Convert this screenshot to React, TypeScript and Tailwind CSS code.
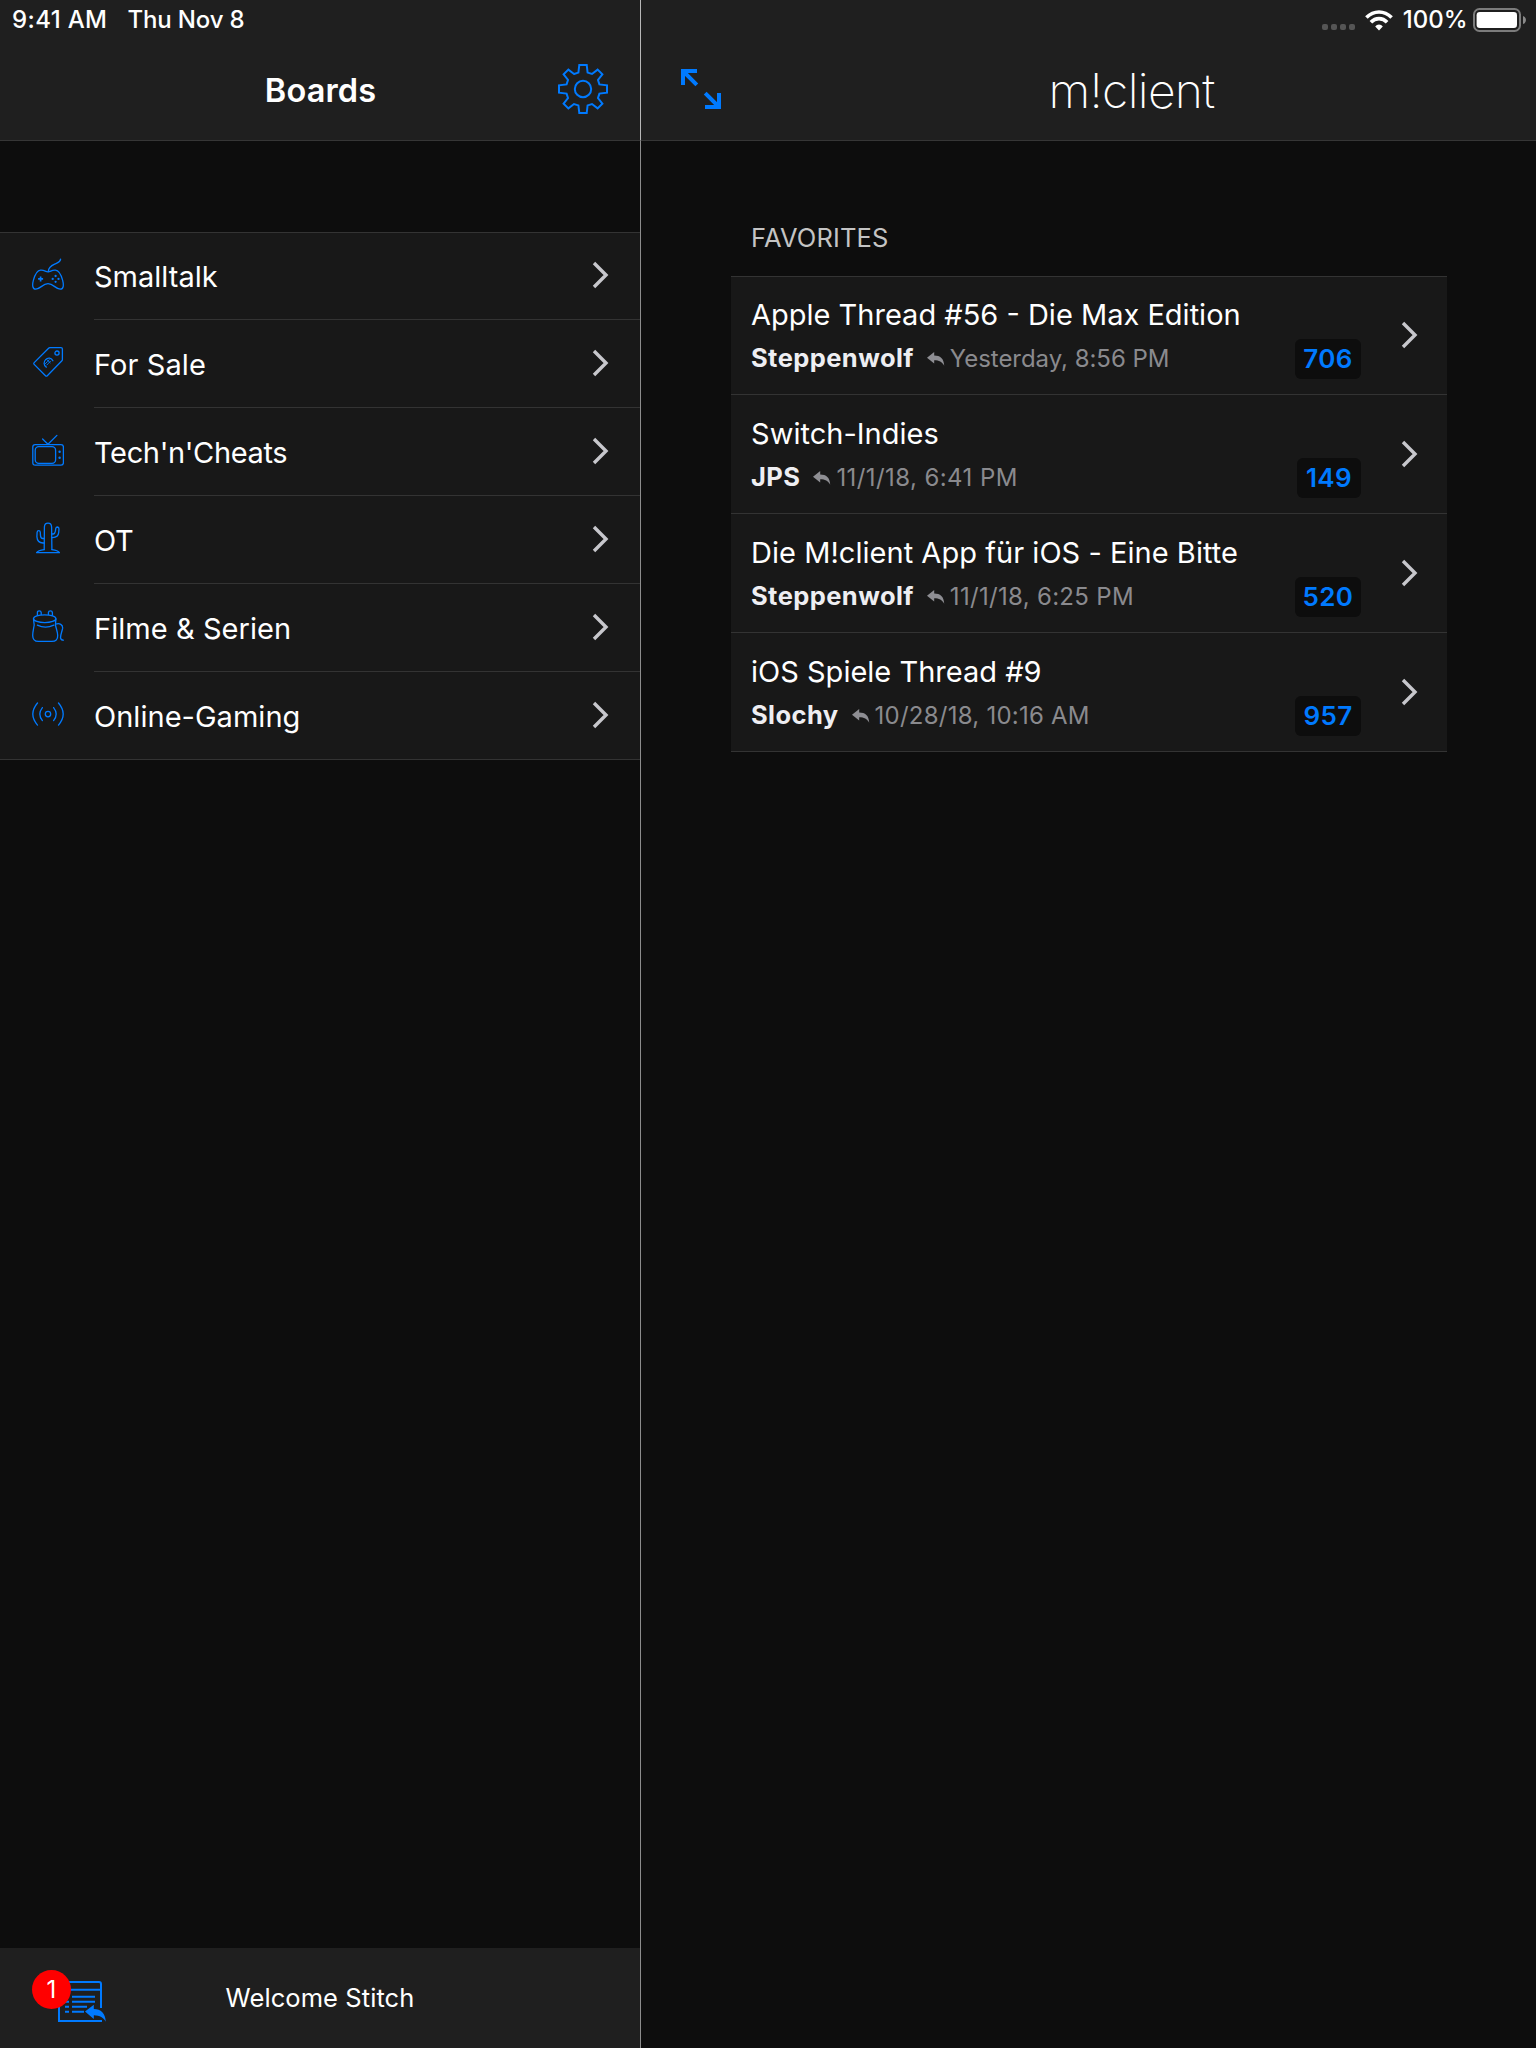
import React from "react";

const BLUE = "#007aff";

function SidebarIcon({ children }: { children: React.ReactNode }) {
  return (
    <svg
      width="32"
      height="32"
      viewBox="0 0 32 32"
      fill="none"
      stroke={BLUE}
      strokeWidth="1.3"
      strokeLinecap="round"
      strokeLinejoin="round"
      className="shrink-0"
    >
      {children}
    </svg>
  );
}

function GamepadIcon() {
  return (
    <SidebarIcon>
      <path d="M28.6 1.2C28.2 4.6 25.6 4.8 22.6 6.2C19 7.8 16.4 9.6 16.3 13.6" />
      <path d="M16 13.8C13.4 13.8 12.6 11.8 8.6 12.1C4.6 12.4 2.8 17 1.4 22.2C0 27.6 0.6 31.2 3.8 31.2C8.2 31.2 10.6 25.6 16 25.6C21.4 25.6 23.8 31.2 28.2 31.2C31.4 31.2 32 27.6 30.6 22.2C29.2 17 27.4 12.4 23.4 12.1C19.4 11.8 18.6 13.8 16 13.8Z" />
      <path d="M8.6 18.4V23.4M6.1 20.9H11.1" strokeWidth="1.7" strokeLinecap="butt" />
      <g fill={BLUE} stroke="none">
        <circle cx="23.6" cy="18" r="1.15" />
        <circle cx="23.6" cy="23.8" r="1.15" />
        <circle cx="20.7" cy="20.9" r="1.15" />
        <circle cx="26.5" cy="20.9" r="1.15" />
      </g>
    </SidebarIcon>
  );
}

function TagIcon() {
  return (
    <SidebarIcon>
      <path d="M17.9 1.7H29Q30.4 1.7 30.4 3.1V13.6Q30.4 14.3 29.9 14.8L15.3 29.7Q14.4 30.6 13.5 29.7L2.2 18.4Q1.3 17.5 2.2 16.6L16.6 2.2Q17.1 1.7 17.9 1.7Z" />
      <circle cx="25" cy="7.1" r="2.1" />
      <path d="M20.9 14.7C19.5 11.6 15.8 11.4 13.6 13.6C11.5 15.8 11.5 19.4 14.3 21.1" />
      <path d="M13.4 17.6L17.4 13.4M14.8 19L18.8 14.9" strokeWidth="1" strokeDasharray="2.2 0.9" />
      <path d="M14.6 13.4L18.2 16.8" strokeWidth="0.9" />
    </SidebarIcon>
  );
}

function TvIcon() {
  return (
    <SidebarIcon>
      <path d="M10.6 5L16 10.2L24.9 1.4" />
      <rect x="0.8" y="10.6" width="30.6" height="20.6" rx="2.4" />
      <rect x="3.2" y="12.7" width="20.4" height="16.6" rx="3.6" />
      <circle cx="27.6" cy="17.8" r="1.2" fill={BLUE} stroke="none" />
      <circle cx="27.6" cy="23.8" r="1.2" fill={BLUE} stroke="none" />
    </SidebarIcon>
  );
}

function CactusIcon() {
  return (
    <SidebarIcon>
      <path d="M12.2 27.6L12.4 5Q12.6 1.2 16 1.2Q19.4 1.2 19.6 5L19.9 27.6" />
      <path d="M12.3 21H11Q5.2 20.8 4.9 14.6L5.1 10.4Q5.3 8.7 6.7 8.7Q8.2 8.7 8.3 10.4L8.5 13.6Q8.7 16.4 10.7 16.5H12.3" />
      <path d="M19.7 15.6H20.6Q26.3 15.2 26.7 10.6L27 7Q27 5.2 25.5 5Q24 5 23.7 6.7L23.4 9.2Q23 11.7 21.4 12H19.7" />
      <path d="M12.2 27.6Q6 28.3 4.6 30.7H27.4Q26 28.3 19.9 27.6" />
    </SidebarIcon>
  );
}

function BackpackIcon() {
  return (
    <SidebarIcon>
      <path d="M5.4 5.2V2.6Q5.4 0.8 7.2 0.8Q9.1 0.8 9.2 2.6V4.6M16.4 4.6V2.6Q16.5 0.8 18.4 0.8Q20.3 0.8 20.4 2.6V5.2" />
      <ellipse cx="12.7" cy="8.7" rx="11.2" ry="3.9" />
      <path d="M5.4 15.2Q13.4 19 21.8 15.2" />
      <path d="M1.5 9L2.2 15C1.6 19 0.7 22 0.7 25.4C0.7 29.6 2.4 31.3 6.4 31.3H19.8C23.8 31.3 25.8 29.6 25.7 25.4C25.6 22 24.4 19 23.4 15L23.9 9" />
      <path d="M23.6 14.2C27.6 12.8 31 14.6 30.6 18.4C30 22 28.2 25 28.6 28.2Q28.9 30.2 31.4 30.2" />
    </SidebarIcon>
  );
}

function BroadcastIcon() {
  return (
    <SidebarIcon>
      <circle cx="16" cy="16.1" r="2.7" />
      <path d="M10.4 9.6Q5.2 16.1 10.4 22.6M21.6 9.6Q26.8 16.1 21.6 22.6" />
      <path d="M5.5 5Q-3.9 16.1 5.5 27.1M26.5 5Q35.9 16.1 26.5 27.1" />
    </SidebarIcon>
  );
}

function GearIcon() {
  return (
    <svg width="50" height="50" viewBox="-25 -25 50 50" fill="none" stroke={BLUE} strokeWidth="2">
      <path d="M-9 -15L-4.6 -16.4L-3.7 -24H3.7L4.6 -16.4L9 -15L14.6 -19.4L19.4 -14.6L15 -9L16.4 -4.6L24 -3.7V3.7L16.4 4.6L15 9L19.4 14.6L14.6 19.4L9 15L4.6 16.4L3.7 24H-3.7L-4.6 16.4L-9 15L-14.6 19.4L-19.4 14.6L-15 9L-16.4 4.6L-24 3.7V-3.7L-16.4 -4.6L-15 -9L-19.4 -14.6L-14.6 -19.4Z" />
      <circle r="8.2" />
    </svg>
  );
}

function ExpandIcon() {
  return (
    <svg width="40" height="40" viewBox="0 0 40 40" fill="none" stroke={BLUE} strokeWidth="4">
      <path d="M2 16V2H16M2 2L15.8 15.8M38 24V38H24M38 38L24.2 24.2" />
    </svg>
  );
}

function Chevron() {
  return (
    <svg width="18" height="28" viewBox="0 0 18 28" fill="none" stroke="#c7c7cc" strokeWidth="3.4" className="shrink-0">
      <path d="M2 2L14 14L2 26" />
    </svg>
  );
}

function ReplyArrow() {
  return (
    <svg width="18" height="14" viewBox="0 0 18 14" fill="#8e8e93" className="shrink-0">
      <path d="M0 5.8L7.2 0V3.4C13.2 3.4 17 6.4 17.2 13.8C15 9.8 12.2 8.3 7.2 8.3V11.6Z" />
    </svg>
  );
}

function WifiIcon() {
  return (
    <svg width="28" height="21" viewBox="0 0 28 21" fill="none" stroke="#fff" strokeWidth="3.6">
      <path d="M1.4 7.6Q7 2 14 2Q21 2 26.6 7.6" />
      <path d="M5.9 12.3Q9.3 8.6 14 8.6Q18.7 8.6 22.1 12.3" />
      <path d="M10.2 16.6Q11.6 14.6 14 14.6Q16.4 14.6 17.8 16.6L14 20.4Z" fill="#fff" stroke="none" />
    </svg>
  );
}

function BatteryIcon() {
  return (
    <svg width="54" height="24" viewBox="0 0 54 24">
      <rect x="1" y="1" width="46" height="22" rx="5.5" fill="none" stroke="#7c7c7c" strokeWidth="2" />
      <rect x="3.6" y="4" width="40.4" height="16" rx="3.2" fill="#fff" />
      <path d="M50 8Q53 9 53 12Q53 15 50 16Z" fill="#8a8a8a" />
    </svg>
  );
}

function ThreadsIcon() {
  return (
    <svg width="50" height="42" viewBox="0 0 50 42" fill="none" stroke={BLUE} strokeWidth="2">
      <path d="M43 27V3Q43 1 41 1H3Q1 1 1 3V40H44M1 8.7H43" />
      <path d="M14 15.8H37M14 20.8H37M14 25.8H29M14 30.8H26M7 15.8H11M7 20.8H11M7 25.8H11M7 30.8H11" />
      <path
        d="M27 30.4L35.8 23.8V28C43 28.2 47.4 32.2 47.8 40.8C45.6 36.6 42 34.4 35.8 34.2V38Z"
        fill={BLUE}
        stroke="none"
      />
    </svg>
  );
}

const boards = [
  { name: "Smalltalk", icon: <GamepadIcon />, tracking: "tracking-normal" },
  { name: "For Sale", icon: <TagIcon />, tracking: "tracking-[0.09px]" },
  { name: "Tech'n'Cheats", icon: <TvIcon />, tracking: "tracking-[-0.36px]" },
  { name: "OT", icon: <CactusIcon />, tracking: "tracking-[-0.3px]" },
  { name: "Filme & Serien", icon: <BackpackIcon />, tracking: "tracking-[0.06px]" },
  { name: "Online-Gaming", icon: <BroadcastIcon />, tracking: "tracking-[0.03px]" },
];

const threads = [
  { title: "Apple Thread #56 - Die Max Edition", author: "Steppenwolf", date: "Yesterday, 8:56 PM", count: 706, titleTracking: "tracking-normal", dateTracking: "tracking-[-0.04px]", countWidth: "w-[66px]" },
  { title: "Switch-Indies", author: "JPS", date: "11/1/18, 6:41 PM", count: 149, titleTracking: "tracking-[0.02px]", dateTracking: "tracking-[0.42px]", countWidth: "w-[64px]" },
  { title: "Die M!client App für iOS - Eine Bitte", author: "Steppenwolf", date: "11/1/18, 6:25 PM", count: 520, titleTracking: "tracking-[0.04px]", dateTracking: "tracking-[0.31px]", countWidth: "w-[66px]" },
  { title: "iOS Spiele Thread #9", author: "Slochy", date: "10/28/18, 10:16 AM", count: 957, titleTracking: "tracking-[0.01px]", dateTracking: "tracking-[0.24px]", countWidth: "w-[66px]" },
];

function rowSize(index: number) {
  if (index === 0) return "h-[87px] pt-[25px]";
  if (index === boards.length - 1) return "h-[87px] pt-[26px]";
  return "h-[88px] pt-[26px]";
}

function Sidebar() {
  return (
    <aside className="flex w-[641px] shrink-0 flex-col">
      <header className="h-[141px] border-r border-b border-r-[#b8b8b8] border-b-[#363636] bg-[#1f1f1f]">
        <div className="flex h-[39px] items-center gap-5 pl-3 text-[24px] font-medium leading-[39px]">
          <span className="tracking-[0.37px]">9:41 AM</span>
          <span className="tracking-[-0.14px]">Thu Nov 8</span>
        </div>
        <div className="grid h-[100px] grid-cols-[1fr_auto_1fr] items-center">
          <span />
          <h1 className="pt-1 pl-px text-[32.5px] font-semibold leading-10 tracking-[0.13px]">Boards</h1>
          <button className="mr-8 justify-self-end">
            <GearIcon />
          </button>
        </div>
      </header>
      <div className="flex flex-1 flex-col border-r border-[#8c8c8c] pt-[91px]">
        <nav className="border-y border-[#333] bg-[#181818]">
          {boards.map((board, i) => (
            <div key={board.name} className={`flex pl-8 ${rowSize(i)}`}>
              {board.icon}
              <div className="ml-[30px] flex-1">
                <div className={`h-[37px] text-[29px] leading-[37px] ${board.tracking}`}>{board.name}</div>
                {i < boards.length - 1 && <div className="mt-6 h-px bg-[#333]" />}
              </div>
              <div className="w-[48px] pt-[3px]">
                <Chevron />
                {i < boards.length - 1 && <div className="mt-[30px] h-px bg-[#333]" />}
              </div>
            </div>
          ))}
        </nav>
      </div>
      <footer className="grid h-[100px] grid-cols-[1fr_auto_1fr] border-r border-[#8c8c8c] bg-[#1f1f1f]">
        <div className="relative h-[100px] pt-[33px] pl-[58px]">
          <ThreadsIcon />
          <span className="absolute top-[22px] left-8 flex h-[39px] w-[39px] items-center justify-center rounded-full bg-[#ff0000] text-[24px] leading-[39px]">
            1
          </span>
        </div>
        <span className="text-[25.5px] leading-[100px] tracking-[0.08px]">Welcome Stitch</span>
        <span />
      </footer>
    </aside>
  );
}

function Main() {
  return (
    <main className="flex-1">
      <header className="h-[141px] border-b border-[#363636] bg-[#1f1f1f]">
        <div className="flex h-[39px] items-start justify-end pr-[9px] text-[24px] font-medium leading-[39px]">
          <div className="mt-6 mr-[10px] flex gap-[3px]">
            <span className="h-1.5 w-1.5 rounded-[2px] bg-[#555]" />
            <span className="h-1.5 w-1.5 rounded-[2px] bg-[#555]" />
            <span className="h-1.5 w-1.5 rounded-[2px] bg-[#555]" />
            <span className="h-1.5 w-1.5 rounded-[2px] bg-[#555]" />
          </div>
          <div className="mt-[9.5px] mr-[10px]">
            <WifiIcon />
          </div>
          <span className="mr-[5.5px]">100%</span>
          <div className="mt-2">
            <BatteryIcon />
          </div>
        </div>
        <div className="flex h-[100px] items-center pl-10">
          <button>
            <ExpandIcon />
          </button>
          <h2 className="flex-1 pt-1 pl-1.5 text-center text-[48px] font-extralight leading-[60px] tracking-[-0.66px]">
            m!client
          </h2>
        </div>
      </header>
      <section className="mr-[89px] ml-[90px] pt-[78px]">
        <h3 className="h-[57px] pl-5 text-[25.5px] leading-[38px] tracking-[0.15px] text-[#c4c4c4]">FAVORITES</h3>
        <div className="border-t border-[#333]">
          {threads.map((thread, i) => (
            <div
              key={thread.title}
              className={`flex items-center border-b border-[#333] bg-[#181818] pl-5 ${i === 0 ? "h-[118px] pb-px" : "h-[119px]"}`}
            >
              <div className={`h-full w-[610px] ${i === 0 ? "pt-5" : "pt-[21px]"}`}>
                <div className={`text-[29px] leading-9 whitespace-nowrap ${thread.titleTracking}`}>{thread.title}</div>
                <div className="flex h-[48px] items-center">
                  <span className="text-[25.5px] font-bold leading-[51px] tracking-[0.42px] text-[#eeeef2]">{thread.author}</span>
                  <span className="mr-[5px] ml-[13px] pt-1">
                    <ReplyArrow />
                  </span>
                  <span className={`flex-1 pt-0.5 text-[24px] leading-[49px] text-[#8a8a8e] ${thread.dateTracking}`}>{thread.date}</span>
                  <span
                    className={`mt-1 h-10 rounded-md bg-[#0d0d0d] text-center text-[26px] font-semibold leading-[39px] tracking-[0.35px] text-[#007aff] ${thread.countWidth}`}
                  >
                    {thread.count}
                  </span>
                </div>
              </div>
              <div className="ml-10">
                <Chevron />
              </div>
            </div>
          ))}
        </div>
      </section>
    </main>
  );
}

export default function App() {
  return (
    <div className="flex h-[2048px] w-[1536px] overflow-hidden bg-[#0d0d0d] font-['Inter',sans-serif] text-white antialiased">
      <Sidebar />
      <Main />
    </div>
  );
}
